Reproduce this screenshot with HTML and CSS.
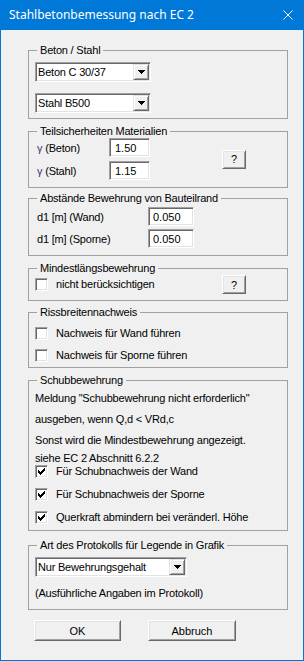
FILE: index.html
```html
<!DOCTYPE html>
<html lang="de">
<head>
    <meta charset="UTF-8">
    <title>Stahlbetonbemessung nach EC 2</title>
    <link rel="stylesheet" href="styles.css">
</head>
<body>
<div class="win">
    <div class="win-title">
        <span class="win-caption">Stahlbetonbemessung nach EC 2</span>
        <svg class="win-close" width="10" height="10" viewBox="0 0 10 10">
            <path d="M0.5 0.5 L9.5 9.5 M9.5 0.5 L0.5 9.5" stroke="#fff" stroke-width="1" fill="none"/>
        </svg>
    </div>

    <div class="dlg">
        <fieldset class="grp grp-material">
            <legend>Beton / Stahl</legend>
            <div class="grp-body">
                <div class="combo combo-mat">
                    <span class="combo-text">Beton C 30/37</span>
                    <span class="combo-btn"><svg width="7" height="4" viewBox="0 0 7 4"><path d="M0 0h7v1H0z M1 1h5v1H1z M2 2h3v1H2z M3 3h1v1H3z"/></svg></span>
                </div>
                <div class="combo combo-mat">
                    <span class="combo-text">Stahl B500</span>
                    <span class="combo-btn"><svg width="7" height="4" viewBox="0 0 7 4"><path d="M0 0h7v1H0z M1 1h5v1H1z M2 2h3v1H2z M3 3h1v1H3z"/></svg></span>
                </div>
            </div>
        </fieldset>

        <fieldset class="grp grp-safety">
            <legend>Teilsicherheiten Materialien</legend>
            <div class="grp-body grp-body-row">
                <div class="field-rows">
                    <div class="field">
                        <span class="field-label label-gamma"><span class="gamma">γ</span> (Beton)</span>
                        <input type="text" class="edit edit-gamma" value="1.50">
                    </div>
                    <div class="field">
                        <span class="field-label label-gamma"><span class="gamma">γ</span> (Stahl)</span>
                        <input type="text" class="edit edit-gamma" value="1.15">
                    </div>
                </div>
                <button class="btn btn-help">?</button>
            </div>
        </fieldset>

        <fieldset class="grp grp-cover">
            <legend>Abstände Bewehrung von Bauteilrand</legend>
            <div class="grp-body">
                <div class="field">
                    <span class="field-label label-cover">d1 [m] (Wand)</span>
                    <input type="text" class="edit edit-cover" value="0.050">
                </div>
                <div class="field">
                    <span class="field-label label-cover">d1 [m] (Sporne)</span>
                    <input type="text" class="edit edit-cover" value="0.050">
                </div>
            </div>
        </fieldset>

        <fieldset class="grp grp-minimum">
            <legend>Mindestlängsbewehrung</legend>
            <div class="grp-body grp-body-row">
                <label class="check-row check-wide"><span class="check"></span>nicht berücksichtigen</label>
                <button class="btn btn-help">?</button>
            </div>
        </fieldset>

        <fieldset class="grp grp-crack">
            <legend>Rissbreitennachweis</legend>
            <div class="grp-body">
                <label class="check-row"><span class="check"></span>Nachweis für Wand führen</label>
                <label class="check-row"><span class="check"></span>Nachweis für Sporne führen</label>
            </div>
        </fieldset>

        <fieldset class="grp grp-shear">
            <legend>Schubbewehrung</legend>
            <div class="grp-body">
                <p class="note">Meldung "Schubbewehrung nicht erforderlich"<br>ausgeben, wenn Q,d &lt; VRd,c<br>Sonst wird die Mindestbewehrung angezeigt.</p>
                <p class="note note-ref">siehe EC 2 Abschnitt 6.2.2</p>
                <div class="check-list">
                    <label class="check-row"><span class="check"><svg width="9" height="9" viewBox="0 0 9 9"><path d="M1 3 L3 5 L8 0 L8 3 L3 8 L1 6 Z"/></svg></span>Für Schubnachweis der Wand</label>
                    <label class="check-row"><span class="check"><svg width="9" height="9" viewBox="0 0 9 9"><path d="M1 3 L3 5 L8 0 L8 3 L3 8 L1 6 Z"/></svg></span>Für Schubnachweis der Sporne</label>
                    <label class="check-row"><span class="check"><svg width="9" height="9" viewBox="0 0 9 9"><path d="M1 3 L3 5 L8 0 L8 3 L3 8 L1 6 Z"/></svg></span>Querkraft abmindern bei veränderl. Höhe</label>
                </div>
            </div>
        </fieldset>

        <fieldset class="grp grp-legend">
            <legend>Art des Protokolls für Legende in Grafik</legend>
            <div class="grp-body">
                <div class="combo combo-legend">
                    <span class="combo-text">Nur Bewehrungsgehalt</span>
                    <span class="combo-btn"><svg width="7" height="4" viewBox="0 0 7 4"><path d="M0 0h7v1H0z M1 1h5v1H1z M2 2h3v1H2z M3 3h1v1H3z"/></svg></span>
                </div>
                <p class="hint">(Ausführliche Angaben im Protokoll)</p>
            </div>
        </fieldset>

        <div class="btn-row">
            <button class="btn btn-ok">OK</button>
            <button class="btn btn-cancel">Abbruch</button>
        </div>
    </div>
</div>
</body>
</html>
```

FILE: styles.css
```css
/* --- Windows-Dialog, klassischer Stil --- */
:root {
    --win-blue: #0078d7;
    --face: #f0f0f0;
    --light: #e3e3e3;
    --shadow: #a0a0a0;
    --dark: #696969;
}

* {
    box-sizing: border-box;
}

body {
    margin: 0;
    background: var(--face);
    font-family: "Liberation Sans", Arial, sans-serif;
    font-size: 11px;
    letter-spacing: -0.2px;
    color: #000;
}

.win {
    width: 304px;
    height: 661px;
    border: 1px solid var(--win-blue);
    border-top: none;
    background: var(--face);
}

.win-title {
    height: 30px;
    display: flex;
    align-items: center;
    padding: 0 10px 0 8px;
    background: var(--win-blue);
}

.win-caption {
    font-family: "Noto Sans", "Open Sans", sans-serif;
    font-size: 12px;
    line-height: 16px;
    letter-spacing: 0;
    color: #fff;
}

.win-close {
    margin-left: auto;
}

.dlg {
    display: flex;
    flex-direction: column;
    padding: 14px 15px 0 27px;
}

/* Gruppenrahmen */
.grp {
    margin: 0;
    padding: 0 6px;
    min-width: 0;
    border: 1px solid var(--shadow);
}

.grp legend {
    margin-left: 2px;
    padding: 0 3px;
    line-height: 13px;
}

.grp-body {
    display: flex;
    flex-direction: column;
}

.grp-body-row {
    flex-direction: row;
    align-items: center;
}

.grp-material .grp-body { padding: 5px 0 5px; gap: 11px; }
.grp-safety { margin-top: 6px; }
.grp-safety .grp-body { padding: 0 0 7px; }
.grp-cover { margin-top: 4px; }
.grp-cover .grp-body { padding: 2px 0 7px; gap: 3px; }
.grp-minimum { margin-top: 6px; }
.grp-minimum .grp-body { padding: 0 0 6px; }
.grp-crack { margin-top: 5px; }
.grp-crack .grp-body { padding: 8px 0 5px; gap: 9px; }
.grp-shear { margin-top: 6px; }
.grp-shear .grp-body { padding: 1px 0 6px; }
.grp-legend { margin-top: 8px; }
.grp-legend .grp-body { padding: 5px 0 9px; }

/* Eingabefelder */
.field-rows {
    flex: 0 0 187px;
    display: flex;
    flex-direction: column;
    gap: 4px;
}

.field {
    display: flex;
    align-items: center;
}

.field-label {
    padding-left: 2px;
    white-space: nowrap;
}

.label-gamma { width: 74px; }
.label-cover { width: 113px; }

.gamma {
    color: #553377;
}

.edit {
    height: 19px;
    padding: 0 0 0 4px;
    border: 1px solid;
    border-color: var(--shadow) #fff #fff var(--shadow);
    box-shadow: inset 1px 1px 0 var(--dark), inset -1px -1px 0 var(--light);
    background: #fff;
    font: inherit;
    color: #000;
    outline: none;
}

.edit-gamma { width: 41px; padding-left: 5px; }
.edit-cover { width: 46px; }

/* Kombinationsfeld */
.combo {
    display: flex;
    align-items: center;
    height: 20px;
    padding: 1px;
    border: 1px solid;
    border-color: var(--shadow) #fff #fff var(--shadow);
    box-shadow: inset 1px 1px 0 var(--dark), inset -1px -1px 0 var(--light);
    background: #fff;
}

.combo-mat { width: 116px; }
.combo-legend { width: 152px; }

.combo-text {
    flex: 1;
    padding-left: 1px;
    white-space: nowrap;
}

.combo-btn {
    width: 16px;
    height: 16px;
    display: flex;
    align-items: center;
    justify-content: center;
    border: 1px solid;
    border-color: var(--light) var(--dark) var(--dark) var(--light);
    box-shadow: inset 1px 1px 0 #fff, inset -1px -1px 0 var(--shadow);
    background: var(--face);
}

.combo-btn svg {
    display: block;
}

/* Kontrollkästchen */
.check-row {
    display: flex;
    align-items: center;
    height: 13px;
    line-height: 13px;
    white-space: nowrap;
}

.check-wide {
    flex: 0 0 187px;
}

.check {
    flex: 0 0 13px;
    width: 13px;
    height: 13px;
    margin-right: 8px;
    display: flex;
    align-items: center;
    justify-content: center;
    border: 1px solid;
    border-color: var(--shadow) #fff #fff var(--shadow);
    box-shadow: inset 1px 1px 0 var(--dark), inset -1px -1px 0 var(--light);
    background: #fff;
}

.check svg {
    display: block;
    shape-rendering: crispEdges;
}

.check-list {
    display: flex;
    flex-direction: column;
    gap: 10px;
}

.note {
    margin: 0;
    line-height: 21px;
    white-space: nowrap;
}

.note-ref {
    margin-top: 1px;
    line-height: 13px;
}

.hint {
    margin: 10px 0 0;
    line-height: 13px;
}

/* Schaltflächen */
.btn {
    height: 21px;
    padding: 0;
    border: 1px solid;
    border-color: #fff var(--dark) var(--dark) #fff;
    box-shadow: inset 1px 1px 0 var(--light), inset -1px -1px 0 var(--shadow);
    background: var(--face);
    font: inherit;
    color: #000;
}

.btn-help {
    width: 24px;
    height: 19px;
}

.btn-row {
    display: flex;
    gap: 27px;
    margin-top: 10px;
    padding-left: 6px;
}

.btn-ok { width: 87px; }
.btn-cancel { width: 88px; }
```
